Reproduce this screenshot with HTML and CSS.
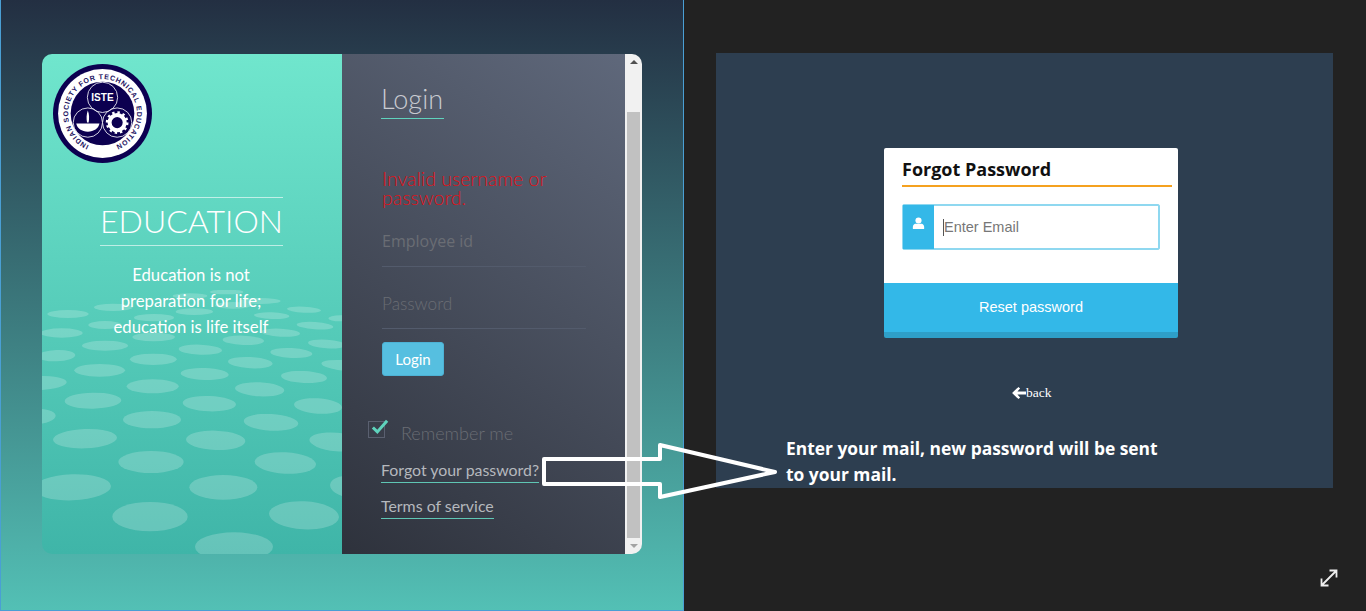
FILE: index.html
```html
<!DOCTYPE html>
<html lang="en">
<head>
<meta charset="utf-8">
<title>Login and forgot password</title>
<link rel="stylesheet" href="styles.css">
</head>
<body>
<div class="stage">
  <section class="left">
    <div class="card">
      <div class="intro">
        <svg class="dots" viewBox="0 0 960 963" aria-hidden="true">
          <g fill="#fff" fill-opacity=".2">
            <ellipse cx="612" cy="770" rx="117" ry="43"/><ellipse cx="360" cy="680" rx="113" ry="44"/>
            <ellipse cx="822" cy="676" rx="105" ry="42" transform="rotate(3 822 676)"/><ellipse cx="127" cy="592" rx="116" ry="39" transform="rotate(-2 127 592)"/>
            <ellipse cx="580" cy="592" rx="102" ry="37"/><ellipse cx="960" cy="590" rx="60" ry="32" transform="rotate(6 960 590)"/>
            <ellipse cx="363" cy="516" rx="98" ry="33"/><ellipse cx="766" cy="519" rx="92" ry="32" transform="rotate(3 766 519)"/>
            <ellipse cx="165" cy="446" rx="96" ry="29" transform="rotate(-2 165 446)"/><ellipse cx="557" cy="451" rx="89" ry="29" transform="rotate(2 557 451)"/>
            <ellipse cx="920" cy="456" rx="82" ry="28" transform="rotate(5 920 456)"/><ellipse cx="366" cy="389" rx="87" ry="26"/>
            <ellipse cx="723" cy="397" rx="82" ry="25" transform="rotate(3 723 397)"/><ellipse cx="538" cy="341" rx="80" ry="23" transform="rotate(2 538 341)"/>
            <ellipse cx="189" cy="332" rx="85" ry="24" transform="rotate(-1 189 332)"/><ellipse cx="864" cy="348" rx="72" ry="23" transform="rotate(4 864 348)"/>
            <ellipse cx="10" cy="380" rx="67" ry="24" transform="rotate(-3 10 380)"/><ellipse cx="368" cy="289" rx="78" ry="21"/>
            <ellipse cx="689" cy="298" rx="74" ry="21" transform="rotate(3 689 298)"/><ellipse cx="524" cy="252" rx="72" ry="18" transform="rotate(2 524 252)"/>
            <ellipse cx="822" cy="261" rx="69" ry="18" transform="rotate(3 822 261)"/><ellipse cx="209" cy="241" rx="76" ry="19"/>
            <ellipse cx="30" cy="279" rx="80" ry="21" transform="rotate(-2 30 279)"/><ellipse cx="370" cy="208" rx="70" ry="17"/>
            <ellipse cx="661" cy="218" rx="67" ry="17" transform="rotate(3 661 218)"/><ellipse cx="950" cy="227" rx="76" ry="16" transform="rotate(5 950 227)"/>
            <ellipse cx="225" cy="167" rx="69" ry="15"/><ellipse cx="511" cy="179" rx="65" ry="15" transform="rotate(2 511 179)"/>
            <ellipse cx="784" cy="189" rx="63" ry="15" transform="rotate(3 784 189)"/><ellipse cx="640" cy="151" rx="62" ry="14" transform="rotate(2 640 151)"/>
            <ellipse cx="80" cy="197" rx="56" ry="17" transform="rotate(-2 80 197)"/><ellipse cx="371" cy="141" rx="64" ry="13"/>
            <ellipse cx="95" cy="129" rx="63" ry="14"/><ellipse cx="752" cy="128" rx="58" ry="12" transform="rotate(3 752 128)"/>
            <ellipse cx="890" cy="162" rx="56" ry="13" transform="rotate(4 890 162)"/><ellipse cx="225" cy="105" rx="50" ry="12"/>
            <ellipse cx="855" cy="107" rx="55" ry="11" transform="rotate(4 855 107)"/><ellipse cx="372" cy="83" rx="60" ry="11"/>
            <ellipse cx="114" cy="72" rx="62" ry="12"/><ellipse cx="725" cy="77" rx="53" ry="10" transform="rotate(2 725 77)"/>
            <ellipse cx="493" cy="65" rx="56" ry="10"/><ellipse cx="250" cy="52" rx="58" ry="11"/>
            <ellipse cx="822" cy="59" rx="51" ry="9" transform="rotate(3 822 59)"/><ellipse cx="690" cy="33" rx="62" ry="9"/>
            <ellipse cx="930" cy="85" rx="35" ry="9"/><ellipse cx="480" cy="18" rx="52" ry="8"/>
            <ellipse cx="590" cy="6" rx="50" ry="7"/><ellipse cx="610" cy="46" rx="55" ry="10"/>
          </g>
        </svg>
        <svg class="logo" viewBox="0 0 98 98" role="img" aria-label="ISTE logo">
          <circle cx="49" cy="49" r="49" fill="#0c0050"/>
          <circle cx="49" cy="49" r="44" fill="#fff"/>
          <circle cx="49" cy="49" r="31.500" fill="#0c0050"/>
          <defs><path id="ring" d="M35.700 80.300A34 34 0 1 1 62.300 80.300"/></defs>
          <text class="logo-ring"><textPath href="#ring" textLength="186">INDIAN SOCIETY FOR TECHNICAL EDUCATION</textPath></text>
          <g fill="none" stroke="#e6e4f0" stroke-width=".9">
            <circle cx="49" cy="33" r="15"/><circle cx="34.500" cy="58" r="14.500"/><circle cx="63.500" cy="58" r="14.500"/>
          </g>
          <text class="logo-iste" x="49" y="36.500" text-anchor="middle">ISTE</text>
          <path fill="#fff" d="M34.500 46c1.500 4 1.500 8 .8 12h-1.600c-.7-4-.7-8 .8-12zM23 59h23c-1 5-5.500 8-11.500 8S24 64 23 59z"/>
          <circle cx="63.500" cy="58" r="7.500" fill="none" stroke="#fff" stroke-width="4"/>
          <circle cx="63.500" cy="58" r="10" fill="none" stroke="#fff" stroke-width="2.500" stroke-dasharray="2.400 2.830"/>
        </svg>
        <h1 class="brand">EDUCATION</h1>
        <p class="quote">Education is not preparation for life; education is life itself</p>
      </div>
      <div class="login">
        <h2 class="login-title">Login</h2>
        <p class="error">Invalid username or password.</p>
        <div class="field field-id">Employee id</div>
        <div class="field field-pass">Password</div>
        <button class="login-btn" type="button">Login</button>
        <div class="remember">
          <span class="check">
            <svg viewBox="0 0 20 18" aria-hidden="true"><path d="M2 9.500l5 5L18 2" fill="none" stroke="#5fd3bd" stroke-width="3.400"/></svg>
          </span>
          <span>Remember me</span>
        </div>
        <a class="link link-first">Forgot your password?</a>
        <a class="link">Terms of service</a>
      </div>
      <div class="scrollbar">
        <span class="arrow-up"></span>
        <span class="thumb"></span>
        <span class="arrow-down"></span>
      </div>
    </div>
  </section>
  <section class="right">
    <div class="shot">
      <div class="forgot">
        <h3 class="forgot-title">Forgot Password</h3>
        <div class="input-group">
          <span class="addon">
            <svg viewBox="0 0 14 14" aria-hidden="true"><circle cx="7" cy="3.800" r="3.300" fill="#fff"/><path d="M1 13c-.6-4 1-5.800 3.300-5.800h5.400C12 7.200 13.600 9 13 13z" fill="#fff"/></svg>
          </span>
          <span class="input"><span class="caret"></span>Enter Email</span>
        </div>
        <div class="reset">Reset password</div>
      </div>
      <a class="back">
        <svg viewBox="0 0 14 13" aria-hidden="true"><path d="M7 .8L1 6.500l6 5.700 1.500-1.500L6 8h8V5H6l2.500-2.700z" fill="#fff"/></svg>back
      </a>
      <p class="note">Enter your mail, new password will be sent to your mail.</p>
    </div>
    <svg class="expand" viewBox="0 0 20 20" aria-hidden="true">
      <path d="M3.500 16.500L16.500 3.500M10.500 2.500h7v7M2.500 10.500v7h7" fill="none" stroke="#eee" stroke-width="1.800"/>
    </svg>
  </section>
  <svg class="callout" viewBox="0 0 240 62" aria-hidden="true">
    <path d="M4 19H120V5L235 32 120 57V44H4z" fill="none" stroke="#fff" stroke-width="4" stroke-linejoin="round"/>
  </svg>
</div>
</body>
</html>
```
FILE: styles.css
```css
* { box-sizing: border-box; }
html, body { margin: 0; height: 100%; overflow: hidden; }
body { font-family: "Lato", "Open Sans", sans-serif; background: #222; }
h1, h2, h3, p { margin: 0; font-weight: normal; }

.stage { position: relative; display: flex; width: 1366px; height: 611px; }

.left {
  width: 684px;
  height: 611px;
  padding: 54px 0 0 41px;
  background: linear-gradient(180deg, #232f42 0%, #53c0b5 100%);
  border: 1px solid #4a9fd4;
  border-width: 0 1px 1px 1px;
}
.card { display: flex; width: 600px; height: 500px; border-radius: 10px; overflow: hidden; }

.intro {
  position: relative;
  width: 300px;
  overflow: hidden;
  padding: 10px 11px 0;
  color: #fff;
  background: linear-gradient(180deg, #70e6cd 0%, #3fb5a8 100%);
}
.dots { position: absolute; left: -12px; top: 236px; width: 320px; height: 321px; }
.logo { position: relative; display: block; width: 99px; height: 99px; }
.logo-ring { font: bold 7px "Liberation Sans", sans-serif; fill: #1a1060; }
.logo-iste { font: bold 10px "Liberation Sans", sans-serif; fill: #fff; }
.brand {
  position: relative;
  width: 183px;
  margin: 34px 0 0 47px;
  padding-bottom: 2px;
  border-top: 1px solid rgba(255, 255, 255, .6);
  border-bottom: 1px solid rgba(255, 255, 255, .6);
  font-size: 32px;
  font-weight: 300;
  line-height: 45px;
  text-align: center;
  white-space: nowrap;
}
.quote {
  position: relative;
  width: 176px;
  margin: 16px 0 0 50px;
  font-size: 16.700px;
  line-height: 26px;
  text-align: center;
}

.login {
  width: 283px;
  padding: 29px 40px 0 39px;
  color: #6a6d74;
  background: linear-gradient(215deg, #5f687b 0%, #2e323c 100%);
}
.login-title {
  display: inline-block;
  padding: 0 1px 3px 0;
  border-bottom: 1px solid #5fd3bd;
  color: #c9cbd1;
  font-size: 27px;
  font-weight: 300;
  line-height: 32px;
}
.error {
  margin: 50px 0 0 1px;
  width: 200px;
  color: #e01018;
  font-size: 19.500px;
  font-weight: 300;
  line-height: 19px;
}
.field {
  width: 204px;
  border-bottom: 1px solid #535b6c;
  color: #6a6d74;
}
.field-id { margin: 14px 0 0 1px; height: 46px; padding-top: 9px; font-family: "Open Sans", sans-serif; font-size: 16px; line-height: 22px; }
.field-pass { margin: 0 0 0 1px; height: 62px; padding-top: 26px; font-size: 17.200px; font-weight: 300; line-height: 22px; }
.login-btn {
  display: block;
  width: 62px;
  height: 34px;
  margin: 13px 0 0 1px;
  padding: 0;
  border: 1px solid #4db2d5;
  border-radius: 3px;
  color: #fff;
  background: #56bfe0;
  font: 15px "Lato", sans-serif;
}
.remember {
  display: flex;
  align-items: flex-start;
  gap: 16px;
  margin: 45px 0 0 -13px;
  color: #6a6d74;
  font-size: 18px;
  font-weight: 300;
  line-height: 22px;
}
.remember span:last-child { margin-top: 1px; }
.check { position: relative; display: block; width: 17px; height: 17px; border: 1px solid #5a6070; }
.check svg { position: absolute; left: 2px; top: -3px; width: 18px; height: 16px; }
.link {
  display: block;
  width: max-content;
  margin: 13px 0 0;
  padding-bottom: 2px;
  border-bottom: 1px solid #5fc6b4;
  color: #b5b8bd;
  font-size: 15.900px;
  line-height: 20px;
}
.link-first { margin-top: 16px; }

.scrollbar {
  display: flex;
  flex-direction: column;
  align-items: center;
  width: 17px;
  background: #f1f1f1;
}
.arrow-up {
  width: 0;
  height: 0;
  margin: 6px 0 48px;
  border: 4px solid transparent;
  border-top: 0;
  border-bottom: 4px solid #505050;
}
.thumb { width: 13px; height: 426px; background: #c1c1c1; }
.arrow-down {
  width: 0;
  height: 0;
  margin-top: 6px;
  border: 4px solid transparent;
  border-bottom: 0;
  border-top: 4px solid #a3a3a3;
}

.right { position: relative; flex: 1; padding: 53px 0 0 32px; background: #222; }
.shot {
  display: flex;
  flex-direction: column;
  align-items: flex-start;
  width: 617px;
  height: 435px;
  padding: 95px 0 0 70px;
  color: #fff;
  background: #2d3e50;
}
.forgot {
  width: 294px;
  height: 190px;
  margin-left: 98px;
  border-radius: 2px;
  overflow: hidden;
  color: #111;
  background: #fff;
  border-bottom: 6px solid #2e9fc8;
}
.forgot-title {
  width: 270px;
  height: 39px;
  margin: 0 0 17px 18px;
  border-bottom: 2px solid #f5a11f;
  font: bold 18px/43px "Open Sans", sans-serif;
  white-space: nowrap;
}
.input-group {
  display: flex;
  width: 258px;
  height: 46px;
  margin: 0 0 33px 18px;
  border: 1px solid #8fd8f0;
  border-radius: 2px;
}
.addon { display: block; width: 31px; padding: 12px 0 0 9px; background: #34b8e8; }
.addon svg { display: block; width: 13px; height: 13px; }
.input {
  display: flex;
  align-items: center;
  flex: 1;
  padding-left: 9px;
  border: 1px solid #8fd8f0;
  border-width: 1px 1px 1px 0;
  color: #777;
  font: 14.500px "Liberation Sans", sans-serif;
}
.caret { width: 1px; height: 17px; background: #555; }
.reset {
  height: 49px;
  color: #fff;
  background: #33b8e8;
  font: 14.500px/49px "Liberation Sans", sans-serif;
  text-align: center;
}
.back {
  display: flex;
  align-items: center;
  margin: 47px 0 0 225px;
  color: #fff;
  font: 13.500px/16px "Liberation Serif", serif;
}
.back svg { display: block; width: 15px; height: 14px; }
.note {
  width: 380px;
  margin: 34px 0 0;
  font: bold 17.400px/26px "Open Sans", sans-serif;
}
.expand { position: absolute; right: 27px; bottom: 23px; width: 20px; height: 20px; }
.callout { position: absolute; left: 540px; top: 440px; width: 240px; height: 62px; }
```
